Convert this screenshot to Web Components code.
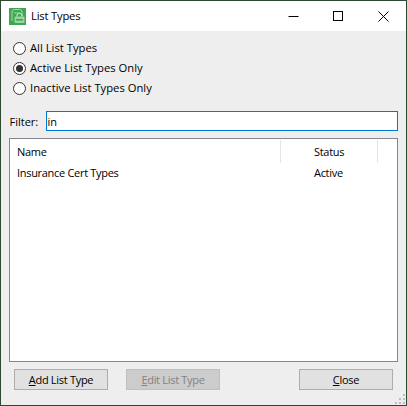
<!DOCTYPE html>
<html><head><meta charset="utf-8"><style>
html,body{margin:0;padding:0;background:#eee}
body{font:11.25px "Open Sans","Noto Sans",sans-serif;color:#000}
</style></head><body>
<template id="t-win"><style>
:host{display:flex;flex-direction:column;width:407px;height:406px;box-sizing:border-box;border:1px solid #2b4a30;background:#eee;overflow:hidden;position:relative}
</style><slot></slot></template>

<template id="t-title"><style>
:host{display:flex;align-items:center;height:30px;background:#fff;flex:none}
.ic{margin-left:8px;width:17px;height:17px;flex:none;display:block}
.t{margin-left:5px;flex:1;font-size:11.25px;letter-spacing:-.2px;padding-bottom:1px}
.b{width:45px;height:30px;display:flex;align-items:center;justify-content:center;flex:none}
svg{display:block}
</style>
<svg class="ic" viewBox="0 0 17 17"><rect width="17" height="17" fill="#3fa652"/><path d="M3 13V4q0-2.500 2.500-2.500h5Q13 1.500 13 4v4" fill="none" stroke="#a8d8ae" stroke-width="1"/><path d="M5 5h6" stroke="#a8d8ae"/><rect x="5.500" y="8.500" width="10" height="6.500" rx="1" fill="#9ad4a3"/><path d="M8 8.500V7q0-1.500 2.500-1.500T13 7v1.500" fill="none" stroke="#cfe9d3"/><path d="M7 11.800h7" stroke="#3c9a4d" stroke-width="1.400"/></svg>
<span class="t"><slot></slot></span>
<span class="b"><svg width="11" height="11" viewBox="0 0 11 11"><path d="M0.500 5.500h10" stroke="#000" stroke-width="1"/></svg></span>
<span class="b"><svg width="11" height="11" viewBox="0 0 11 11"><rect x=".5" y=".5" width="9" height="9" fill="none" stroke="#000"/></svg></span>
<span class="b"><svg width="11" height="11" viewBox="0 0 11 11"><path d="M.5.5l10 10M10.500.5l-10 10" stroke="#000" stroke-width="1"/></svg></span>
</template>

<template id="t-radio"><style>
:host{display:flex;align-items:center;height:20px;gap:4px;padding-left:12px}
.c{width:13px;height:13px;box-sizing:border-box;border:1px solid #333;border-radius:50%;background:#fff;display:flex;align-items:center;justify-content:center}
:host([checked]) .c::after{content:"";width:7px;height:7px;border-radius:50%;background:#333}
.t{padding-bottom:1px}
</style><span class="c"></span><span class="t"><slot></slot></span></template>

<template id="t-filter"><style>
:host{display:flex;align-items:center;height:20px;margin:13px 8px 0 9px;font-size:11px}
.l{width:36px;flex:none;margin-left:-.5px;padding-right:.5px;box-sizing:border-box}
.i{flex:1;height:20px;box-sizing:border-box;border:1px solid #0078d7;background:#fff;padding-left:1px;display:flex;align-items:center}
</style><span class="l"><slot name="label"></slot></span><span class="i"><slot></slot></span></template>

<template id="t-list"><style>
:host{display:block;margin:7px 8px 0 8px;height:224px;box-sizing:border-box;border:1px solid #828790;background:#fff;flex:none;font-size:11px;letter-spacing:-.3px}
</style><slot></slot></template>

<template id="t-row"><style>
:host{display:grid;grid-template-columns:263px 1fr;height:20px;box-sizing:border-box;padding-bottom:2px;align-items:center;padding-left:7px}
.s{padding-left:34px}
</style><span><slot></slot></span><span class="s"><slot name="s"></slot></span></template>

<template id="t-head"><style>
:host{display:grid;grid-template-columns:263px 98px 1fr;height:23px;align-items:center;padding:1px 0 0 7px}
.s{padding-left:33px;box-sizing:border-box;border-left:1px solid #e5e5e5;height:23px;display:flex;align-items:center;border-right:1px solid #e5e5e5}
</style><span><slot></slot></span><span class="s"><slot name="s"></slot></span></template>

<template id="t-bar"><style>
:host{display:flex;margin:7px 0 0 13px;gap:18px}
::slotted(:last-child){margin-left:61px}
</style><slot></slot></template>

<template id="t-btn"><style>
:host{display:flex;align-items:center;justify-content:center;width:94px;height:21px;box-sizing:border-box;border:1px solid #adadad;background:#e1e1e1;font-size:11px;letter-spacing:-.3px}
:host([disabled]){background:#ccc;border-color:#bfbfbf;color:#838383}
</style><span><slot></slot></span></template>

<template id="t-grip"><style>
:host{position:absolute;right:1px;bottom:1px;width:10px;height:10px}
i{position:absolute;width:2px;height:2px;background:#bdbdbd}
</style><i style="right:0;bottom:0"></i><i style="right:4px;bottom:0"></i><i style="right:8px;bottom:0"></i><i style="right:0;bottom:4px"></i><i style="right:4px;bottom:4px"></i><i style="right:0;bottom:8px"></i></template>

<x-window>
<x-title>List Types</x-title>
<x-group style="padding-top:7px">
<x-radio>All List Types</x-radio>
<x-radio checked>Active List Types Only</x-radio>
<x-radio>Inactive List Types Only</x-radio>
</x-group>
<x-filter><span slot="label">Filter:</span>in</x-filter>
<x-list>
<x-head>Name<span slot="s">Status</span></x-head>
<x-row>Insurance Cert Types<span slot="s">Active</span></x-row>
</x-list>
<x-bar>
<x-btn><u>A</u>dd List Type</x-btn>
<x-btn disabled><u>E</u>dit List Type</x-btn>
<x-btn><u>C</u>lose</x-btn>
</x-bar>
<x-grip></x-grip>
</x-window>
<script>
for(const [n,id] of [['x-window','t-win'],['x-title','t-title'],['x-radio','t-radio'],['x-filter','t-filter'],['x-list','t-list'],['x-head','t-head'],['x-row','t-row'],['x-bar','t-bar'],['x-btn','t-btn'],['x-grip','t-grip']]){
 customElements.define(n,class extends HTMLElement{constructor(){super();this.attachShadow({mode:'open'}).appendChild(document.getElementById(id).content.cloneNode(true))}});
}
customElements.define('x-group',class extends HTMLElement{constructor(){super();this.attachShadow({mode:'open'}).innerHTML='<style>:host{display:block}</style><slot></slot>'}});
</script>
</body></html>
